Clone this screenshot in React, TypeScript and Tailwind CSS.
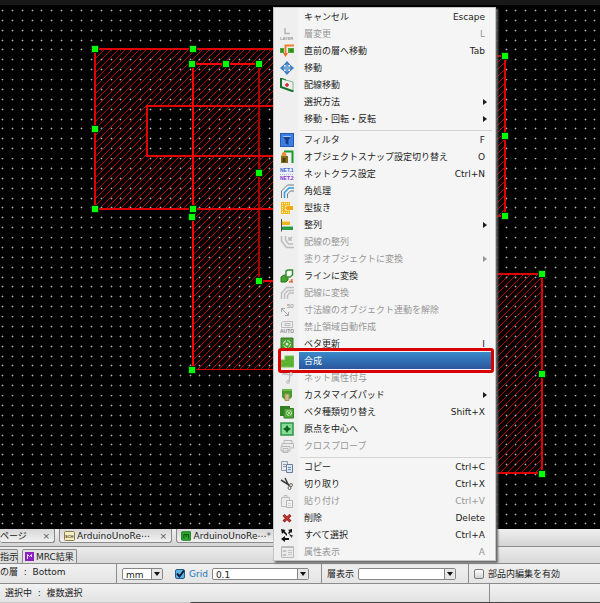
import type { ReactNode } from "react";
import clsx from "clsx";

interface MenuEntry {
  label: string;
  shortcut?: string;
  icon?: ReactNode;
  disabled?: boolean;
  submenu?: boolean;
  selected?: boolean;
}

// grid dot offsets, the grid repeats every 79px
const DOTS_X = [2, 12, 22, 32, 41, 51, 61, 71];
const DOTS_Y = [10, 20, 30, 40, 49, 59, 69, 79];

const HANDLES = [
  [95, 49], [193, 49], [95, 129], [95, 209], [193, 209],
  [192, 64], [226, 64], [259, 64], [259, 173], [192, 217], [259, 281], [192, 370],
  [505, 56], [505, 136], [505, 216],
  [542, 274], [542, 374], [542, 474],
];

function Icon({ children }: { children: ReactNode }) {
  return (
    <svg viewBox="0 0 14 14" className="h-3.5 w-3.5" fill="none" aria-hidden="true">
      {children}
    </svg>
  );
}

const LayerIcon = (
  <Icon>
    <path d="M5 1v5.500h5" stroke="#b4b4b4" strokeWidth="1.500" />
    <text x="0" y="13" fontSize="4" fontWeight="bold" fill="#999" className="font-['Liberation_Sans',sans-serif]">LAYER</text>
  </Icon>
);

const MoveLayerIcon = (
  <Icon>
    <path d="M0 4h4v5H0zM8 4h6v5H8z" fill="#4faa35" />
    <path d="M1 5h2v3H1zM10 5h3v3h-3z" fill="#2f8a22" />
    <path d="M14 1.500H5.500V10" stroke="#f08030" strokeWidth="2" />
    <path d="M3 9h5l-2.500 4z" fill="#ee6c1c" />
  </Icon>
);

const MoveIcon = (
  <Icon>
    <path d="M7 2v10M2 7h10" stroke="#3d7dbd" strokeWidth="2.500" />
    <path d="M7 0l3.500 4h-7zM7 14l3.500-4h-7zM0 7l4-3.500v7zM14 7l-4-3.500v7z" fill="#3d7dbd" />
    <path d="M7 3v8M3 7h8" stroke="#8fc0e8" strokeWidth="1" />
  </Icon>
);

const MoveTrackIcon = (
  <Icon>
    <path d="M1 0v9l12.500 4.500" stroke="#16702a" strokeWidth="2" />
    <path d="M2 1l11 3v8" stroke="#7ab889" />
    <path d="M1 0l5 2" stroke="#16702a" />
    <path d="M5 7h4M7 5v4" stroke="#e01c2c" strokeWidth="1.500" />
  </Icon>
);

const FilterIcon = (
  <Icon>
    <path d="M0 0h14v14H0z" fill="#2257b5" />
    <path d="M1 1h12v12H1z" fill="#3d7fe0" />
    <path d="M2.500 3h9L8.500 7v5l-3-1.500V7z" fill="#173f86" />
    <path d="M2.500 3h9l-1 1h-7z" fill="#a9c9f5" />
  </Icon>
);

const SnapIcon = (
  <Icon>
    <path d="M4 1.500h8.500V13" stroke="#199a2d" strokeWidth="2" />
    <path d="M1 6h7v7H1z" fill="#806a1c" />
    <path d="M2.500 8h3v4h-3z" fill="#4d3e0c" />
    <path d="M2 6V4.500h4V6" stroke="#a48a36" />
    <circle cx="4" cy="4" r="2" fill="#f0872c" />
  </Icon>
);

const NetClassIcon = (
  <Icon>
    <g className="font-['Liberation_Sans',sans-serif]" fontSize="5" fontWeight="bold">
      <text x="0" y="5" fill="#3a66dc">NET.1</text>
      <text x="0" y="13" fill="#8431d8">NET.2</text>
    </g>
    <path d="M0 7.500h14" stroke="#9db6ee" strokeDasharray="1 1" />
  </Icon>
);

const CornerIcon = (
  <Icon>
    <path d="M1.500 14V7l6-6H14" stroke="#6e7880" />
    <path d="M4.500 14V8.500L9 4h5" stroke="#2f9be0" strokeWidth="1.500" />
    <path d="M7.500 14v-4L10.500 7H14" stroke="#6e7880" />
  </Icon>
);

const CutoutIcon = (
  <Icon>
    <path d="M1 1h9v3.500H5v5h5V13H1z" fill="#f6b91c" />
    <path d="M2 2.500h7M2.500 4v7M2 11.500h7" stroke="#fff0b0" strokeDasharray="1 1" />
    <path d="M7 5h6v4H7L5 7z" fill="#f7a80c" />
  </Icon>
);

const AlignIcon = (
  <Icon>
    <path d="M1.500 1v12.500" stroke="#4b4b4b" />
    <path d="M2 3h8v4H2z" fill="#f4b21d" />
    <path d="M2 3h8v1H2z" fill="#fbd978" />
    <path d="M2 8h11v4H2z" fill="#2d9a46" />
    <path d="M2 8h11v1H2z" fill="#83cf90" />
  </Icon>
);

const TrackAlignIcon = (
  <Icon>
    <path d="M1.500 1v5l5 6.500H14M5.500 1v4l3 4H13M9 5l3-3M9 2v3h3" stroke="#bcbcbc" strokeWidth="1.500" />
  </Icon>
);

const ToLineIcon = (
  <Icon>
    <path d="M1 8l3-2h4v5l-2 2H1z" fill="#42a32e" stroke="#227a1c" />
    <path d="M6 2l2-1h4.500v5L10 8H6z" fill="#f4fbf2" stroke="#3a8f34" strokeWidth="1.500" />
    <path d="M9 13c2 0 3-1 3-3M11 13h2" stroke="#ee6a38" strokeWidth="1.500" />
  </Icon>
);

const ToTrackIcon = (
  <Icon>
    <path d="M1.500 13V7l5-5.500H14M4.500 13V8l3.500-3.500h6M7.500 13V9.500L9.500 7H14" stroke="#c0c0c0" strokeWidth="1.500" />
  </Icon>
);

const DimensionIcon = (
  <Icon>
    <path d="M2 6l6 6M1.500 9V5.500H5M5 12.500h3.500V9" stroke="#a6a6a6" />
    <text x="7" y="5" fontSize="6" fill="#8f8f8f" className="font-['Liberation_Sans',sans-serif]">50</text>
  </Icon>
);

const AutoIcon = (
  <Icon>
    <path d="M1.500 6.500v-4l2-1h9v6h-11z" fill="#ececec" stroke="#bcbcbc" />
    <path d="M5 3.500h5v2H5z" stroke="#bcbcbc" />
    <text x="0" y="13" fontSize="5" fontWeight="bold" fill="#8a8a8a" className="font-['Liberation_Sans',sans-serif]">AUTO</text>
  </Icon>
);

const PourIcon = (
  <Icon>
    <path d="M1 1h12v12H1z" fill="#4c9c34" stroke="#357d26" />
    <circle cx="7" cy="7" r="3.500" stroke="#d5f0c8" strokeDasharray="4 1.500" />
    <circle cx="7" cy="7" r="1.500" fill="#d5f0c8" />
  </Icon>
);

const MergeIcon = (
  <Icon>
    <path d="M1 13V6h4V2h9v11z" fill="#58b030" stroke="#77c552" />
    <path d="M2 10l3-3 2 2 5-5M6 13l7-7" stroke="#7cc94f" strokeDasharray="1 1" />
  </Icon>
);

const NetAttrIcon = (
  <Icon>
    <path d="M2 3h4l4 1-1 7" stroke="#bdbdbd" strokeWidth="1.500" />
    <circle cx="11" cy="3" r="1.500" stroke="#bdbdbd" />
    <circle cx="8" cy="11" r="1.500" stroke="#bdbdbd" />
  </Icon>
);

const PadIcon = (
  <Icon>
    <path d="M2 1h10v8l-2 2H4L2 9z" fill="#47982d" />
    <path d="M2 1h10v2H2z" fill="#69b94b" />
    <path d="M5 6h4v6.500H5z" fill="#cbbd83" stroke="#a4955a" />
  </Icon>
);

const PourTypeIcon = (
  <Icon>
    <path d="M0 1h10v10H0z" fill="#2f7f22" />
    <path d="M4 3.500h9.500v9.500H4z" fill="#55a93c" stroke="#357d26" />
    <circle cx="9" cy="8" r="2.500" stroke="#d0efc2" strokeDasharray="3 1" />
    <circle cx="9" cy="8" r="1" fill="#d0efc2" />
  </Icon>
);

const OriginIcon = (
  <Icon>
    <path d="M1 1h12v12H1z" fill="#82dd93" stroke="#2f9448" strokeWidth="1.500" />
    <path d="M7 3l1.500 2.500L11 7 8.500 8.500 7 11 5.500 8.500 3 7l2.500-1.500z" fill="#0c5f20" />
  </Icon>
);

const CrossProbeIcon = (
  <Icon>
    <path d="M4 4V1.500h8V4M2 8V4.500h11.500V9H11M1 7.500h9V12H1zM3 9.500h5v4H3z" fill="#ebebeb" stroke="#b8b8b8" />
  </Icon>
);

const CopyIcon = (
  <Icon>
    <path d="M1.500 1.500h6v9h-6z" fill="#e6ebf2" stroke="#8d98a8" />
    <path d="M3 4.500h3M3 6.500h3" stroke="#8d98a8" />
    <path d="M6.500 4.500h6v8h-6z" fill="#dbe6f5" stroke="#6c7c94" />
    <path d="M8 7.500h3M8 9.500h3" stroke="#6f8db8" />
  </Icon>
);

const CutIcon = (
  <Icon>
    <path d="M1 3l8 5M5 1l4 8" stroke="#3c3c3c" strokeWidth="1.500" />
    <circle cx="11" cy="8" r="1.500" stroke="#6e665c" />
    <circle cx="9.500" cy="11" r="1.500" stroke="#6e665c" />
  </Icon>
);

const PasteIcon = (
  <Icon>
    <path d="M1.500 3.500h8v9h-8zM4 3.500v-2h3v2" fill="#ececec" stroke="#bcbcbc" />
    <path d="M6.500 6.500h6v7h-6z" fill="#f2f2f2" stroke="#b5b5b5" />
    <path d="M8 9.500h3M8 11.500h3" stroke="#cfcfcf" />
  </Icon>
);

const DeleteIcon = (
  <Icon>
    <path d="M3.500 4l7 6.500M10.500 4l-7 6.500" stroke="#8e1d1a" strokeWidth="3" />
    <path d="M4 4l6 6M10 4l-6 6" stroke="#c23b33" strokeWidth="1.500" />
  </Icon>
);

const SelectAllIcon = (
  <Icon>
    <path d="M1 1l4.500 1-1 1L7 6v2L3.500 4.500 2 6zM8 2l4-1v4l-1-1-2 2-1-1 1.500-2zM9 6l4.500 2-2 .500.500 2zM1 11l4-3v2h4v2H5v2z" fill="#111" />
  </Icon>
);

const PropertyIcon = (
  <Icon>
    <path d="M1.500 2.500h12v10h-12z" fill="#ececec" stroke="#b8b8b8" />
    <path d="M1 1.500h13" stroke="#c0c0c0" />
    <path d="M3 5.500h3v1H3zM3 9.500h3v1H3zM8 5.500h4M8 7.500h4M8 9.500h4" stroke="#c4c4c4" />
  </Icon>
);

const GROUPS: MenuEntry[][] = [
  [
    { label: "キャンセル", shortcut: "Escape" },
    { label: "層変更", shortcut: "L", icon: LayerIcon, disabled: true },
    { label: "直前の層へ移動", shortcut: "Tab", icon: MoveLayerIcon },
    { label: "移動", icon: MoveIcon },
    { label: "配線移動", icon: MoveTrackIcon },
    { label: "選択方法", submenu: true },
    { label: "移動・回転・反転", submenu: true },
  ],
  [
    { label: "フィルタ", shortcut: "F", icon: FilterIcon },
    { label: "オブジェクトスナップ設定切り替え", shortcut: "O", icon: SnapIcon },
    { label: "ネットクラス設定", shortcut: "Ctrl+N", icon: NetClassIcon },
    { label: "角処理", icon: CornerIcon },
    { label: "型抜き", icon: CutoutIcon },
    { label: "整列", icon: AlignIcon, submenu: true },
    { label: "配線の整列", icon: TrackAlignIcon, disabled: true },
    { label: "塗りオブジェクトに変換", disabled: true, submenu: true },
    { label: "ラインに変換", icon: ToLineIcon },
    { label: "配線に変換", icon: ToTrackIcon, disabled: true },
    { label: "寸法線のオブジェクト連動を解除", icon: DimensionIcon, disabled: true },
    { label: "禁止領域自動作成", icon: AutoIcon, disabled: true },
    { label: "ベタ更新", shortcut: "I", icon: PourIcon },
    { label: "合成", icon: MergeIcon, selected: true },
    { label: "ネット属性付与", icon: NetAttrIcon, disabled: true },
    { label: "カスタマイズパッド", icon: PadIcon, submenu: true },
    { label: "ベタ種類切り替え", shortcut: "Shift+X", icon: PourTypeIcon },
    { label: "原点を中心へ", icon: OriginIcon },
    { label: "クロスプローブ", icon: CrossProbeIcon, disabled: true },
  ],
  [
    { label: "コピー", shortcut: "Ctrl+C", icon: CopyIcon },
    { label: "切り取り", shortcut: "Ctrl+X", icon: CutIcon },
    { label: "貼り付け", shortcut: "Ctrl+V", icon: PasteIcon, disabled: true },
    { label: "削除", shortcut: "Delete", icon: DeleteIcon },
    { label: "すべて選択", shortcut: "Ctrl+A", icon: SelectAllIcon },
    { label: "属性表示", shortcut: "A", icon: PropertyIcon, disabled: true },
  ],
];

function MenuRow({ item }: { item: MenuEntry }) {
  return (
    <button
      type="button"
      role="menuitem"
      disabled={item.disabled}
      className={clsx(
        "relative flex h-[17px] w-full items-center text-left",
        item.disabled ? "text-[#969696]" : "text-[#1c1c1c]"
      )}
    >
      <span className="flex w-[25px] shrink-0 justify-center">{item.icon}</span>
      <span
        className={clsx(
          "mr-px flex h-full grow items-center justify-between pr-[7px] pl-[5px]",
          item.selected && "bg-linear-to-b from-[#3a8aca] to-[#2a569c] text-white"
        )}
      >
        <span>{item.label}</span>
        {item.shortcut && <span className="pr-0.5">{item.shortcut}</span>}
        {item.submenu && (
          <svg viewBox="0 0 4 6" className="h-1.5 w-1" aria-hidden="true">
            <path d="M0 0l4 3-4 3z" fill="currentColor" />
          </svg>
        )}
      </span>
      {item.selected && (
        <span className="absolute -top-1 -bottom-1 right-px left-1 rounded-[3px] border-[3px] border-[#d90000]" />
      )}
    </button>
  );
}

function ContextMenu() {
  return (
    <div
      role="menu"
      className="absolute top-[7px] left-[273px] w-[223px] border border-[#c4c4c4] bg-linear-to-r from-[#efefef] from-[24px] to-[#f5f5f5] to-[25px] shadow-[2px_2px_2px_#666]"
    >
      {GROUPS.map((group, i) => (
        <div key={i}>
          {i > 0 && <div className="mr-[3px] ml-[26px] h-1 border-b border-[#d4d4d4]" />}
          {group.map((item) => (
            <MenuRow key={item.label} item={item} />
          ))}
        </div>
      ))}
    </div>
  );
}

function BoardCanvas() {
  return (
    <svg className="block h-[529px] w-full bg-black" aria-label="Board">
      <defs>
        <pattern id="dots" width="79" height="79" patternUnits="userSpaceOnUse">
          {DOTS_X.map((x) =>
            DOTS_Y.map((y) => (
              <g key={`${x}-${y}`}>
                <path d={`M${x - 1} ${y % 79}h3v1h-3zM${x} ${(y % 79) - 1}h1v3h-1z`} fill="#3c3c3c" />
                <path d={`M${x} ${y % 79}h1v1h-1z`} fill="#b4b4b4" />
              </g>
            ))
          )}
        </pattern>
        <pattern id="hatch" width="7" height="7" patternUnits="userSpaceOnUse">
          <path d="M-1 8L8-1M-1 1L1-1M6 8L8 6" stroke="#c00000" strokeWidth="1" />
        </pattern>
      </defs>

      {/* copper areas */}
      <path
        d="M95 49H400V209H259V281H400V370H192V209H95zM147 106V156H192V106zM259 106V156H400V106z"
        fill="url(#hatch)"
        fillRule="evenodd"
      />
      <path d="M400 56H505V216H400zM400 274H542V473H400z" fill="url(#hatch)" />
      <rect width="100%" height="100%" fill="url(#dots)" />
      <rect width="100%" height="5" fill="#181818" />

      <g fill="none" stroke="#e00000" shapeRendering="crispEdges">
        <path d="M259 64V281" stroke="#a80000" strokeWidth="2" />
        <path d="M400 106H147V156H400" strokeWidth="2" />
        <path d="M400 49H95V209H400M259 281H400" strokeWidth="2" />
        <path d="M400 369.500H192" />
        <path d="M192.500 370V64H259" stroke="#ff0000" strokeWidth="2" />
        <path d="M400 56H505V216H400M400 274H542V473H400" strokeWidth="2" />
      </g>

      {HANDLES.map(([x, y]) => (
        <g key={`${x}-${y}`}>
          <rect x={x - 4} y={y - 4} width="8" height="8" fill="#002800" />
          <rect x={x - 3} y={y - 3} width="6" height="6" fill="#00ff00" />
        </g>
      ))}
    </svg>
  );
}

function Combo({ label, value, className }: { label: string; value: string; className: string }) {
  return (
    <span className={clsx("relative flex h-3 rounded-[2px] border border-[#868686] bg-white", className)}>
      <select aria-label={label} className="w-full appearance-none pl-[3px] leading-[12px] text-[#222] outline-none">
        <option>{value}</option>
      </select>
      <span className="pointer-events-none absolute inset-y-0 right-0 flex w-[11px] items-center justify-center border-l border-[#868686] bg-[#e6e6e6]">
        <svg viewBox="0 0 6 4" className="h-1 w-1.5" aria-hidden="true">
          <path d="M0 0h6L3 4z" fill="#111" />
        </svg>
      </span>
    </span>
  );
}

function FileTab({ title, icon, end, className }: { title: string; icon?: ReactNode; end: string; className: string }) {
  return (
    <button
      type="button"
      className={clsx(
        "flex h-[14px] shrink-0 items-center rounded-b-[3px] border border-t-0 border-[#8a8a8a] bg-linear-to-b from-[#d6d6d6] to-[#f2f2f2] pr-1",
        className
      )}
    >
      {icon}
      <span>{title}</span>
      <span className="ml-auto text-[#555]">{end}</span>
    </button>
  );
}

const SchIcon = (
  <svg viewBox="0 0 11 10" className="mr-0.5 h-2.5 w-[11px]" aria-hidden="true">
    <rect x="0.500" y="0.500" width="10" height="9" rx="1" fill="#f7edc4" stroke="#8d7d4c" />
    <text x="1" y="7" fontSize="4" fontWeight="bold" fill="#4b3f1c" className="font-['Liberation_Sans',sans-serif]">SCH</text>
  </svg>
);

const PcbIcon = (
  <svg viewBox="0 0 11 10" className="mr-0.5 h-2.5 w-[11px]" aria-hidden="true">
    <rect x="0.500" y="0.500" width="10" height="9" rx="1" fill="#2fa32f" stroke="#1b7a20" />
    <path d="M3 7.500v-4h5v4M5.500 4v2" stroke="#0b4f12" fill="none" />
  </svg>
);

export default function App() {
  return (
    <div className="relative w-full overflow-hidden bg-[#e9e9e9] font-['DejaVu_Sans','Noto_Sans_CJK_JP',sans-serif] text-[9px] leading-[12px] text-[#222]">
      <BoardCanvas />

      {/* document tabs */}
      <div className="flex h-[18px] gap-1 border-b border-[#8c8c8c] bg-linear-to-b from-[#f0f0f0] to-[#d4d4d4]">
        <FileTab title="ページ" end="×" className="w-[55px] border-l-0" />
        <FileTab title="ArduinoUnoRe⋯" icon={SchIcon} end="×" className="w-[113px] pl-1" />
        <FileTab title="ArduinoUnoRe⋯" icon={PcbIcon} end="*" className="w-[100px] pl-1" />
      </div>

      {/* result tabs */}
      <div className="flex h-[17px] items-end gap-1 border-b border-[#8c8c8c] bg-linear-to-b from-[#ececec] to-[#d8d8d8]">
        <button type="button" className="h-[14px] w-[18px] rounded-tr-[2px] border border-b-0 border-l-0 border-[#8a8a8a] bg-[#dedede] text-left whitespace-nowrap">
          指示
        </button>
        <button type="button" className="flex h-[14px] items-center gap-0.5 rounded-t-[2px] border border-b-0 border-[#8a8a8a] bg-[#e2e2e2] px-0.5">
          <svg viewBox="0 0 9 9" className="h-[9px] w-[9px]" aria-hidden="true">
            <path d="M0 0h9v9H0z" fill="#8d1fc4" />
            <path d="M2.500 7V2.500L4.500 4.500l2-2V5" stroke="#f3d6ff" fill="none" />
          </svg>
          MRC結果
        </button>
      </div>

      {/* toolbar */}
      <div className="flex h-5 border-b border-[#8c8c8c] bg-linear-to-b from-[#f0f0f0] to-[#e4e4e4]">
        <div className="flex w-[117px] shrink-0 items-center border-r border-[#8c8c8c] pb-1 whitespace-pre">の層  :  Bottom</div>
        <div className="flex w-[205px] shrink-0 items-center border-r border-[#8c8c8c] pl-[5px]">
          <Combo label="単位" value="mm" className="w-[41px]" />
          <label className="ml-3 flex items-center gap-1 text-[#2477b8]">
            <span className="relative flex">
              <input type="checkbox" defaultChecked className="h-[10px] w-[10px] appearance-none rounded-[2px] border border-[#255b86] bg-[#5fb4e6]" />
              <svg viewBox="0 0 10 10" className="pointer-events-none absolute h-[10px] w-[10px]" aria-hidden="true">
                <path d="M2 4.500l2.500 3L9 1.500" stroke="#0a2038" strokeWidth="2" fill="none" />
              </svg>
            </span>
            Grid
          </label>
          <Combo label="Grid" value="0.1" className="ml-1 w-[97px]" />
        </div>
        <div className="flex w-[147px] shrink-0 items-center gap-1 border-r border-[#8c8c8c] pl-[5px]">
          <span>層表示</span>
          <Combo label="層表示" value="" className="w-[98px]" />
        </div>
        <label className="flex items-center gap-1 pl-[5px] whitespace-nowrap">
          <input type="checkbox" className="h-[10px] w-[10px] appearance-none rounded-[2px] border border-[#7a7a7a] bg-linear-to-b from-white to-[#d2d2d2]" />
          部品内編集を有効
        </label>
      </div>

      {/* status bar */}
      <div className="flex h-[18px] bg-linear-to-b from-[#f2f2f2] to-[#e2e2e2]">
        <div className="flex w-[490px] shrink-0 items-center border-r border-[#8c8c8c] pl-[5px] whitespace-pre">選択中  :  複数選択</div>
      </div>
      <div className="h-px bg-linear-to-r from-[#c8c8c8] from-[190px] to-[#444] to-[191px]" />

      <ContextMenu />
    </div>
  );
}
